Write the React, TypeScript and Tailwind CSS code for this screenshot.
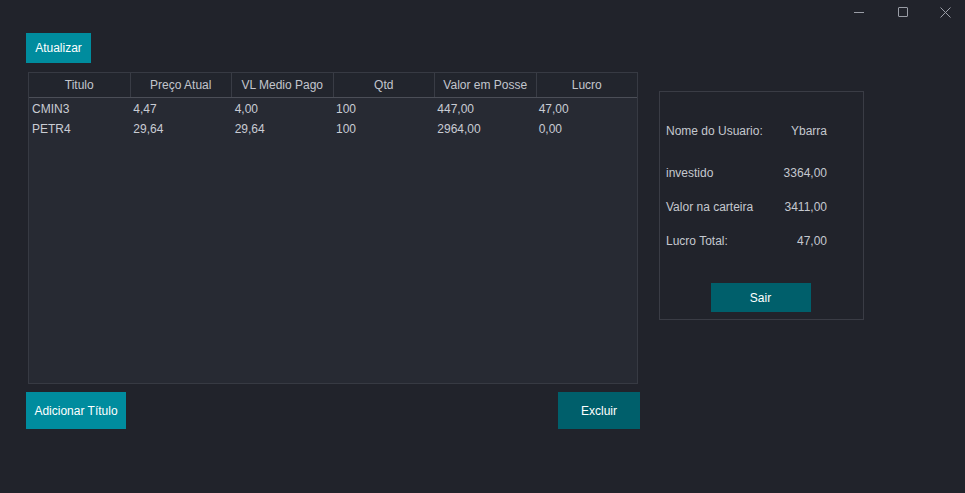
import React from "react";

const columns = ["Titulo", "Preço Atual", "VL Medio Pago", "Qtd", "Valor em Posse", "Lucro"];

const rows = [
  ["CMIN3", "4,47", "4,00", "100", "447,00", "47,00"],
  ["PETR4", "29,64", "29,64", "100", "2964,00", "0,00"],
];

const resumo = [
  { label: "investido", value: "3364,00" },
  { label: "Valor na carteira", value: "3411,00" },
  { label: "Lucro Total:", value: "47,00" },
];

function TitleBar() {
  return (
    <div className="flex h-[24px] items-center justify-end text-[#9a9da6]">
      <div className="flex h-full w-[44px] items-center justify-center">
        <div className="h-px w-[10px] bg-current" />
      </div>
      <div className="flex h-full w-[44px] items-center justify-center">
        <div className="h-[10px] w-[10px] rounded-[1px] border border-current" />
      </div>
      <div className="flex h-full w-[40px] items-center justify-center">
        <svg width="11" height="11" viewBox="0 0 11 11" stroke="currentColor" strokeWidth="1">
          <path d="M0.5 0.5 L10.5 10.5 M10.5 0.5 L0.5 10.5" />
        </svg>
      </div>
    </div>
  );
}

function Table() {
  return (
    <div className="ml-[2px] mt-[9px] flex h-[312px] w-[610px] flex-col border border-[#373a43] bg-[#272a33]">
      <div className="flex h-[25px] border-b border-[#4b4e57] bg-[#22252d]">
        {columns.map((c, i) => (
          <div
            key={c}
            className={
              "flex flex-1 items-center justify-center text-[#c3c6cd] " +
              (i < columns.length - 1 ? "border-r border-[#393c45]" : "")
            }
          >
            {c}
          </div>
        ))}
      </div>
      <div className="pt-[1px]">
        {rows.map((r) => (
          <div key={r[0]} className="flex h-[20px] items-center">
            {r.map((v, i) => (
              <div key={i} className="flex-1 pl-[3px] text-[#c9ccd3]">
                {v}
              </div>
            ))}
          </div>
        ))}
      </div>
    </div>
  );
}

export default function App() {
  return (
    <div
      className="h-[493px] w-[965px] overflow-hidden bg-[#21232b] text-[12px]"
      style={{ fontFamily: '"Liberation Sans", Arial, sans-serif' }}
    >
      <TitleBar />
      <div className="flex pl-[26px] pt-[9px]">
        {/* coluna esquerda */}
        <div className="flex w-[614px] flex-col">
          <button className="h-[30px] w-[65px] bg-[#008c9e] text-white">Atualizar</button>
          <Table />
          <div className="mt-[8px] flex justify-between">
            <button className="h-[37px] w-[100px] bg-[#008c9e] text-white">Adicionar Título</button>
            <button className="h-[37px] w-[82px] bg-[#005f6b] text-white">Excluir</button>
          </div>
        </div>

        {/* painel do usuario */}
        <div className="ml-[19px] mt-[58px] flex h-[229px] w-[205px] flex-col border border-[#3a3c45] pl-[6px] pr-[36px] text-[#c5c8cf]">
          <div className="mt-[29px] flex h-[20px] items-center justify-between">
            <span>Nome do Usuario:</span>
            <span>Ybarra</span>
          </div>
          <div className="mt-[22px] flex flex-col gap-[14px]">
            {resumo.map((r) => (
              <div key={r.label} className="flex h-[20px] items-center justify-between">
                <span>{r.label}</span>
                <span>{r.value}</span>
              </div>
            ))}
          </div>
          <div className="mt-[32px] flex justify-center pl-[28px]">
            <button className="h-[29px] w-[100px] bg-[#005f6b] text-white">Sair</button>
          </div>
        </div>
      </div>
    </div>
  );
}
